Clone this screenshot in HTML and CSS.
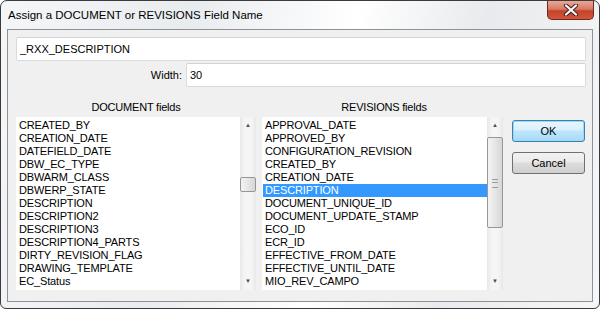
FILE: index.html
```html
<!DOCTYPE html>
<html lang="en">
<head>
  <meta charset="UTF-8">
  <title>Assign a DOCUMENT or REVISIONS Field Name</title>
  <link rel="stylesheet" href="styles.css">
</head>
<body>
  <div class="ventana">
    <div class="titulo">
      <span>Assign a DOCUMENT or REVISIONS Field Name</span>
      <button class="cerrar">
        <svg width="16" height="12" viewBox="0 0 16 12">
          <path d="M3 1.5 L13 10.5 M13 1.5 L3 10.5" stroke="#4a2020" stroke-width="4.2" stroke-linecap="round"/>
          <path d="M3 1.5 L13 10.5 M13 1.5 L3 10.5" stroke="#ffffff" stroke-width="2.2" stroke-linecap="round"/>
        </svg>
      </button>
    </div>

    <div class="cliente">
      <input class="campo" type="text" value="_RXX_DESCRIPTION">
      <div class="fila-ancho">
        <label>Width:</label>
        <input class="campo" type="text" value="30">
      </div>

      <div class="listas">
        <div class="columna izq">
          <div class="etiqueta">DOCUMENT fields</div>
          <div class="lista">
            <ul id="docList"></ul>
            <div class="scroll">
              <span class="flecha">&#9650;</span>
              <div class="pista">
                <div class="pulgar chico" style="top: 43px; height: 15px;"></div>
              </div>
              <span class="flecha">&#9660;</span>
            </div>
          </div>
        </div>

        <div class="columna der">
          <div class="etiqueta">REVISIONS fields</div>
          <div class="lista">
            <ul id="revList"></ul>
            <div class="scroll">
              <span class="flecha">&#9650;</span>
              <div class="pista">
                <div class="pulgar" style="top: 3px; height: 91px;"><span class="agarre"></span></div>
              </div>
              <span class="flecha">&#9660;</span>
            </div>
          </div>
        </div>

        <div class="botones">
          <button class="boton ok">OK</button>
          <button class="boton">Cancel</button>
        </div>
      </div>
    </div>
  </div>

  <script>
    const documentos = ['CREATED_BY', 'CREATION_DATE', 'DATEFIELD_DATE', 'DBW_EC_TYPE', 'DBWARM_CLASS',
      'DBWERP_STATE', 'DESCRIPTION', 'DESCRIPTION2', 'DESCRIPTION3', 'DESCRIPTION4_PARTS',
      'DIRTY_REVISION_FLAG', 'DRAWING_TEMPLATE', 'EC_Status'];
    const revisiones = ['APPROVAL_DATE', 'APPROVED_BY', 'CONFIGURATION_REVISION', 'CREATED_BY',
      'CREATION_DATE', 'DESCRIPTION', 'DOCUMENT_UNIQUE_ID', 'DOCUMENT_UPDATE_STAMP', 'ECO_ID',
      'ECR_ID', 'EFFECTIVE_FROM_DATE', 'EFFECTIVE_UNTIL_DATE', 'MIO_REV_CAMPO'];

    function llenar(id, items, elegido) {
      const ul = document.getElementById(id);
      items.forEach((texto, i) => {
        const li = document.createElement('li');
        li.textContent = texto;
        if (i === elegido) li.className = 'elegido';
        ul.appendChild(li);
      });
    }

    llenar('docList', documentos, -1);
    llenar('revList', revisiones, 5);
  </script>
</body>
</html>
```

FILE: styles.css
```css
body {
  margin: 0;
  background: #ffffff;
  font-family: 'Liberation Sans', Arial, sans-serif;
}

.ventana {
  width: 586px;
  height: 301px;
  padding: 0 6px 6px 6px;
  border: 1px solid #3b3b3b;
  border-radius: 7px 7px 6px 6px;
  background: linear-gradient(100deg, #f4f6f8 0%, #e9ecef 30%, #ffffff 55%, #e8eaed 75%, #f5f6f7 100%);
}

.titulo {
  height: 28px;
  display: flex;
  justify-content: space-between;
  align-items: flex-start;
  font-size: 11.5px;
  color: #000;
}

.titulo span {
  margin-top: 8px;
  margin-left: 1px;
}

.cerrar {
  width: 47px;
  height: 19px;
  margin-right: -1px;
  padding: 0;
  border: 1px solid #6b2a22;
  border-top: none;
  border-radius: 0 0 5px 5px;
  background: linear-gradient(#e9a899 0%, #d87a63 45%, #c4432b 55%, #d0553a 100%);
  display: flex;
  align-items: center;
  justify-content: center;
}

.cliente {
  height: 264px;
  padding: 7px 6px 0 8px;
  border: 1px solid #8e9196;
  background: #f0f0f0;
}

.campo {
  display: block;
  box-sizing: border-box;
  width: 570px;
  height: 24px;
  margin: 0;
  padding: 0 3px;
  border: 1px solid #dadada;
  border-top-color: #d3d3d3;
  border-radius: 2px;
  background: #fff;
  font-family: 'Liberation Sans', Arial, sans-serif;
  font-size: 11px;
  color: #000;
}

.fila-ancho {
  display: flex;
  align-items: center;
  margin-top: 2px;
}

.fila-ancho label {
  width: 166px;
  text-align: right;
  font-size: 11px;
  margin-right: 4px;
}

.fila-ancho .campo {
  width: 400px;
}

.listas {
  display: flex;
  margin-top: 14px;
}

.columna {
  display: flex;
  flex-direction: column;
}

.izq {
  width: 240px;
  margin-right: 6px;
}

.der {
  width: 241px;
  margin-right: 9px;
}

.etiqueta {
  height: 16px;
  text-align: center;
  font-size: 11px;
  letter-spacing: -0.2px;
  color: #000;
}

.izq .etiqueta {
  padding-left: 0;
}

.der .etiqueta {
  padding-left: 3px;
}

.lista {
  display: flex;
  height: 173px;
  background: #fff;
}

.lista ul {
  flex: 1;
  margin: 0;
  padding: 2px 0 0 1px;
  list-style: none;
  font-size: 11px;
  line-height: 13px;
  color: #000;
  overflow: hidden;
}

.lista li {
  padding-left: 2px;
  letter-spacing: -0.15px;
  white-space: nowrap;
}

.lista li.elegido {
  background: #3399ff;
  color: #fff;
}

.scroll {
  width: 16px;
  display: flex;
  flex-direction: column;
  align-items: center;
  background: linear-gradient(90deg, #e8e8e8, #f5f5f5 30%, #f5f5f5 70%, #e8e8e8);
}

.flecha {
  height: 17px;
  font-size: 6px;
  line-height: 17px;
  color: #4d4d4d;
}

.pista {
  flex: 1;
  width: 100%;
  position: relative;
}

.pulgar {
  position: absolute;
  left: 0;
  right: 0;
  box-sizing: border-box;
  border: 1px solid #979797;
  border-radius: 2px;
  background: linear-gradient(90deg, #f3f3f3, #e6e6e6 50%, #d6d6d6);
}

.agarre {
  position: absolute;
  left: 4px;
  right: 4px;
  top: 41px;
  height: 7px;
  border-top: 1px solid #999;
  border-bottom: 1px solid #999;
}

.agarre::after {
  content: '';
  position: absolute;
  left: 0;
  right: 0;
  top: 2px;
  border-top: 1px solid #999;
}

.botones {
  display: flex;
  flex-direction: column;
  padding-top: 19px;
  gap: 10px;
}

.boton {
  width: 73px;
  height: 22px;
  padding: 0;
  border: 1px solid #707070;
  border-radius: 3px;
  background: linear-gradient(#f2f2f2 0%, #ebebeb 45%, #dddddd 50%, #cfcfcf 100%);
  font-family: 'Liberation Sans', Arial, sans-serif;
  font-size: 11px;
  color: #000;
}

.boton.ok {
  border-color: #3c7fb1;
  box-shadow: inset 0 0 0 1px #9cdaf4;
  background: linear-gradient(#eaf6fd 0%, #d9f0fc 45%, #bee6fd 50%, #a7d9f5 100%);
}
```
